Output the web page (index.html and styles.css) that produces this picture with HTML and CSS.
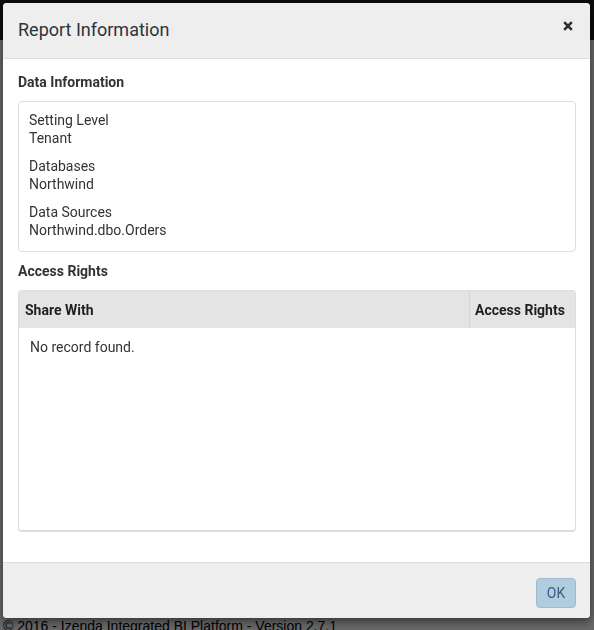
FILE: index.html
```html
<!DOCTYPE html>
<html>
<head>
<meta charset="utf-8">
<link rel="stylesheet" href="styles.css">
</head>
<body>
<div class="page">
  <div class="navbar"><span class="nav-title">Report Designer</span></div>
  <div class="page-main"></div>
  <div class="page-footer">© 2016 - Izenda Integrated BI Platform - Version 2.7.1</div>
</div>
<div class="backdrop"></div>
<div class="modal">
  <div class="modal-header">
    <h4 class="modal-title">Report Information</h4>
    <button class="close" aria-label="Close">
      <svg width="10" height="10" viewBox="0 0 10 10"><path d="M1.2 1.2 L8.8 8.8 M8.8 1.2 L1.2 8.8" stroke="#2e2e2e" stroke-width="2.6" stroke-linecap="butt"/></svg>
    </button>
  </div>
  <div class="modal-body">
    <div class="section-title">Data Information</div>
    <div class="info-box">
      <div class="info-group"><div>Setting Level</div><div>Tenant</div></div>
      <div class="info-group"><div>Databases</div><div>Northwind</div></div>
      <div class="info-group"><div>Data Sources</div><div>Northwind.dbo.Orders</div></div>
    </div>
    <div class="section-title">Access Rights</div>
    <div class="grid">
      <div class="grid-head">
        <div class="col-share">Share With</div>
        <div class="col-rights">Access Rights</div>
      </div>
      <div class="grid-body">No record found.</div>
    </div>
  </div>
  <div class="modal-footer">
    <button class="btn-ok">OK</button>
  </div>
</div>
</body>
</html>
```
FILE: styles.css
```css
html, body {
  margin: 0;
  padding: 0;
  height: 100%;
  overflow: hidden;
}
body {
  font-family: Roboto, "Liberation Sans", sans-serif;
  background: #fff;
}
.page {
  height: 630px;
  display: flex;
  flex-direction: column;
}
.navbar {
  height: 40px;
  background: #1e1e1e;
  overflow: hidden;
  flex: none;
}
.nav-title {
  display: block;
  margin: 1px 0 0 6px;
  color: #666;
  font-size: 20px;
  line-height: 24px;
}
.page-main {
  flex: 1;
}
.page-footer {
  flex: none;
  height: 12px;
  font-family: "Liberation Sans", Arial, sans-serif;
  font-size: 14px;
  line-height: 16px;
  color: #000;
  padding-left: 3px;
  white-space: nowrap;
}
.backdrop {
  position: fixed;
  inset: 0;
  background: rgba(0, 0, 0, 0.6);
}
.modal {
  position: fixed;
  top: 3px;
  left: 3px;
  width: 587px;
  height: 615px;
  background: #fff;
  border-radius: 4px;
  box-shadow: 0 3px 9px rgba(0, 0, 0, 0.5);
  display: flex;
  flex-direction: column;
  overflow: hidden;
  color: #333;
}
.modal-header {
  flex: none;
  height: 56px;
  box-sizing: border-box;
  padding: 15px 17px 0 15px;
  background: #eee;
  border-bottom: 1px solid #ddd;
  display: flex;
  justify-content: space-between;
  align-items: flex-start;
}
.modal-title {
  margin: 0;
  font-size: 18px;
  line-height: 24px;
  font-weight: 400;
  color: #2f323a;
}
.close {
  border: 0;
  background: none;
  padding: 0;
  margin-top: 3px;
  width: 10px;
  height: 10px;
  display: flex;
}
.modal-body {
  flex: 1;
  padding: 0 14px 0 15px;
}
.section-title {
  font-size: 14px;
  line-height: 20px;
  font-weight: 700;
  margin: 13px 0 9px;
}
.info-box + .section-title {
  margin-top: 9px;
}
.info-box {
  border: 1px solid #ddd;
  border-radius: 4px;
  padding: 9px 10px 12px;
  font-size: 14px;
  line-height: 18px;
}
.info-group + .info-group {
  margin-top: 10px;
}
.grid {
  border: 1px solid #ddd;
  border-bottom-width: 2px;
  border-radius: 4px;
  height: 239px;
  display: flex;
  flex-direction: column;
}
.grid-head {
  display: flex;
  background: #e4e4e4;
  height: 37px;
  font-size: 14px;
  font-weight: 700;
  color: #1f1f1f;
  border-radius: 3px 3px 0 0;
}
.col-share {
  flex: 1;
  padding-left: 6px;
  display: flex;
  align-items: center;
  border-right: 1px solid #d6d6d6;
}
.col-rights {
  width: 100px;
  padding-left: 5px;
  display: flex;
  align-items: center;
}
.grid-body {
  padding: 10px 11px;
  font-size: 14px;
  line-height: 18px;
}
.modal-footer {
  flex: none;
  height: 56px;
  box-sizing: border-box;
  background: #eee;
  border-top: 1px solid #ddd;
  padding: 15px 14px 0 0;
  display: flex;
  justify-content: flex-end;
  align-items: flex-start;
}
.btn-ok {
  width: 40px;
  height: 30px;
  border: 1px solid #9ebbd3;
  border-radius: 4px;
  background: #b1cbdf;
  color: #3a5a80;
  font-family: Roboto, "Liberation Sans", sans-serif;
  font-size: 14px;
  padding: 0;
}
```
